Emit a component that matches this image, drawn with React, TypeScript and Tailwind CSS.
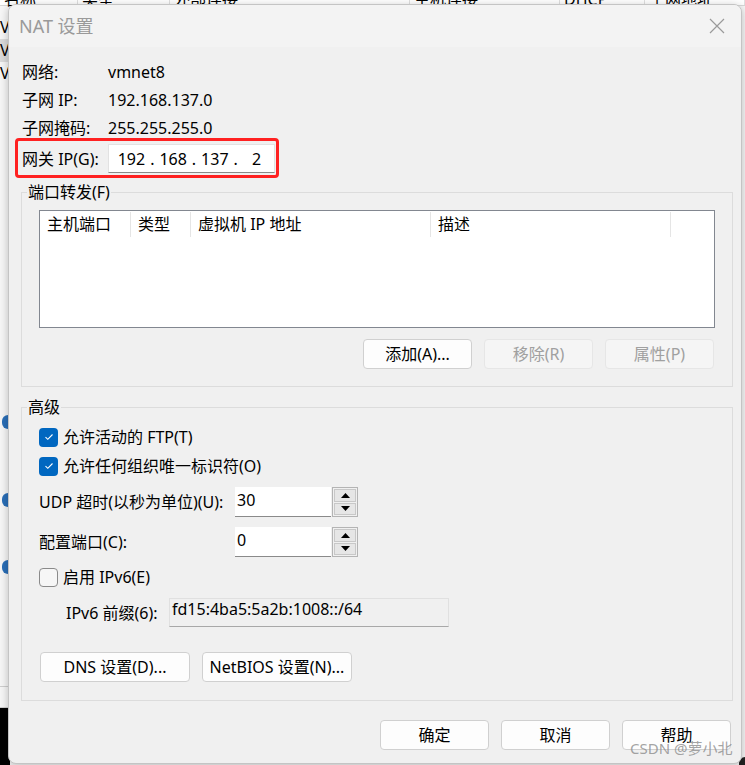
import type { ReactNode } from "react";

const FONT = "font-['Noto_Sans','Noto_Sans_CJK_SC',sans-serif]";

function Knopf({ children, w, disabled }: { children: ReactNode; w: string; disabled?: boolean }) {
  return (
    <div
      className={`${w} flex h-[30px] items-center justify-center rounded-[4px] border ${
        disabled ? "border-[#e6e6e6] bg-[#f5f5f5] text-[#a0a0a0]" : "border-[#d0d0d0] bg-[#fdfdfd] text-black"
      }`}
    >
      {children}
    </div>
  );
}

function Haken({ checked }: { checked?: boolean }) {
  if (checked) {
    return (
      <div className="flex h-[19px] w-[19px] items-center justify-center rounded-[4px] bg-[#0067c0]">
        <svg width="10" height="8" viewBox="0 0 10 8" fill="none">
          <path d="M1.5 4.2 L3.8 6.3 L8.5 1.5" stroke="white" strokeWidth="1.1" />
        </svg>
      </div>
    );
  }
  return <div className="h-[19px] w-[19px] rounded-[4px] border border-[#8a8a8a] bg-[#f6f6f6]" />;
}

function Spinner({ wert }: { wert: string }) {
  return (
    <div className="flex h-[30px]">
      <div className="flex w-[96px] items-start border-b border-[#8a8a8a] bg-white pl-[2px] pt-[1px]">{wert}</div>
      <div className="ml-[1px] flex w-[26px] flex-col gap-[1px] border border-[#b4b4b4] bg-[#f0f0f0] p-[1px]">
        {["up", "down"].map((r) => (
          <div key={r} className="flex flex-1 items-center justify-center border border-[#c8c8c8] bg-[#e6e6e6]">
            <svg width="9" height="5" viewBox="0 0 9 5">
              <path d={r === "up" ? "M0 5 L4.5 0 L9 5 Z" : "M0 0 L4.5 5 L9 0 Z"} fill="black" />
            </svg>
          </div>
        ))}
      </div>
    </div>
  );
}

function Gruppe({ titel, children, className }: { titel: string; children: ReactNode; className: string }) {
  return (
    <div className={`relative border border-[#dcdcdc] ${className}`}>
      <span className="absolute left-[5px] top-[-12px] bg-[#f0f0f0] px-[1px] leading-[22px]">{titel}</span>
      {children}
    </div>
  );
}

const HINTERGRUND = ["名称", "类型", "外部连接", "主机连接", "DHCP", "子网地址"];
const SPALTEN = [
  { titel: "主机端口", w: "w-[91px]" },
  { titel: "类型", w: "w-[60px]" },
  { titel: "虚拟机 IP 地址", w: "w-[240px]" },
  { titel: "描述", w: "w-[240px]" },
];

export default function App() {
  return (
    <div className={`relative h-[765px] w-[745px] overflow-hidden bg-[#f7f7f7] text-[16px] text-black ${FONT}`}>
      {/* fenster dahinter */}
      <div className="absolute left-0 top-[-13px] flex h-[19px] w-full border-b border-[#d8d8d8] bg-white">
        {HINTERGRUND.map((t, i) => (
          <div
            key={t}
            className={`border-r border-[#e0e0e0] pl-[4px] ${
              ["w-[78px]", "w-[92px]", "w-[240px]", "w-[150px]", "w-[85px]", "w-[100px]"][i]
            }`}
          >
            {t}
          </div>
        ))}
      </div>
      <div className="absolute left-0 top-[16px] flex w-[8px] flex-col leading-[23px]">
        <span>V</span>
        <span className="bg-[#dcdcdc]">V</span>
        <span>V</span>
      </div>
      <div className="absolute left-[2px] top-[415px] h-[14px] w-[6px] rounded-l-full bg-[#2a6fb8]" />
      <div className="absolute left-[2px] top-[493px] h-[14px] w-[6px] rounded-l-full bg-[#2a6fb8]" />
      <div className="absolute left-[2px] top-[560px] h-[14px] w-[6px] rounded-l-full bg-[#2a6fb8]" />
      <div className="absolute left-0 top-[686px] h-[22px] w-[8px] border-y border-[#cfcfcf]" />
      <div className="absolute bottom-0 left-0 top-[708px] w-[10px] bg-black" />
      <div className="absolute bottom-0 right-0 h-[8px] w-[6px] rounded-tl-[6px] bg-[#222]" />

      {/* NAT dialog */}
      <div className="absolute left-[8px] top-[4px] flex h-[760px] w-[734px] flex-col overflow-hidden rounded-[8px] border border-[#c4c4c4] bg-[#f0f0f0] shadow-[0_2px_10px_rgba(0,0,0,0.25)]">
        <div className="flex h-[42px] shrink-0 items-center justify-between bg-[#f3f3f3] pl-[10px] pr-[12px]">
          <span className="text-[18px] text-[#9a9a9a]">NAT 设置</span>
          <svg width="16" height="16" viewBox="0 0 16 16" className="mr-[4px]">
            <path d="M1 1 L15 15 M15 1 L1 15" stroke="#9a9a9a" strokeWidth="1.2" />
          </svg>
        </div>

        <div className="flex flex-1 flex-col pl-[12px] pr-[8px] pt-[11px]">
          {[
            ["网络:", "vmnet8"],
            ["子网 IP:", "192.168.137.0"],
            ["子网掩码:", "255.255.255.0"],
          ].map(([k, v]) => (
            <div key={k} className="flex h-[28px] items-center pl-[1px]">
              <span className="w-[86px]">{k}</span>
              <span>{v}</span>
            </div>
          ))}

          <div className="relative mt-[2px] flex h-[29px] items-center pl-[1px]">
            <span className="w-[86px]">网关 IP(G):</span>
            <div className="flex h-[29px] w-[167px] items-center border border-[#e2e2e2] border-b-[#8a8a8a] bg-white pl-[5px]">
              {["192", ".", "168", ".", "137", ".", "2"].map((t, i) => (
                <span key={i} className={`text-center ${t === "." ? "w-[7px]" : "w-[36px]"}`}>
                  {t}
                </span>
              ))}
            </div>
            <div className="pointer-events-none absolute left-[-6px] top-[-6px] h-[40px] w-[264px] rounded-[4px] border-[3px] border-[#ff2121]" />
          </div>

          <Gruppe titel="端口转发(F)" className="mt-[19px] h-[195px] pl-[17px] pr-[17px] pt-[17px]">
            <div className="h-[118px] border border-[#828790] bg-white">
              <div className="flex h-[26px] items-center">
                {SPALTEN.map((s) => (
                  <div key={s.titel} className={`${s.w} flex h-[25px] items-center border-r border-[#e5e5e5] pl-[7px]`}>
                    {s.titel}
                  </div>
                ))}
              </div>
            </div>
            <div className="mt-[11px] flex justify-end gap-[12px] pr-[1px]">
              <Knopf w="w-[109px]">添加(A)...</Knopf>
              <Knopf w="w-[109px]" disabled>
                移除(R)
              </Knopf>
              <Knopf w="w-[109px]" disabled>
                属性(P)
              </Knopf>
            </div>
          </Gruppe>

          <Gruppe titel="高级" className="mt-[20px] h-[294px] pl-[17px] pt-[19px]">
            <div className="flex h-[20px] items-center gap-[5px]">
              <Haken checked />
              <span>允许活动的 FTP(T)</span>
            </div>
            <div className="mt-[9px] flex h-[20px] items-center gap-[5px]">
              <Haken checked />
              <span>允许任何组织唯一标识符(O)</span>
            </div>
            <div className="mt-[11px] flex h-[30px] items-center">
              <span className="w-[196px]">UDP 超时(以秒为单位)(U):</span>
              <Spinner wert="30" />
            </div>
            <div className="mt-[10px] flex h-[30px] items-center">
              <span className="w-[196px]">配置端口(C):</span>
              <Spinner wert="0" />
            </div>
            <div className="mt-[10px] flex h-[20px] items-center gap-[5px]">
              <Haken />
              <span>启用 IPv6(E)</span>
            </div>
            <div className="mt-[11px] flex h-[29px] items-center pl-[27px]">
              <span className="w-[103px]">IPv6 前缀(6):</span>
              <div className="flex h-[29px] w-[280px] items-start border border-[#e0e0e0] border-b-[#a8a8a8] bg-[#f0f0f0] pl-[2px] leading-[21px]">
                fd15:4ba5:5a2b:1008::/64
              </div>
            </div>
            <div className="mt-[25px] flex gap-[12px] pl-[1px]">
              <Knopf w="w-[150px]">DNS 设置(D)...</Knopf>
              <Knopf w="w-[150px]">NetBIOS 设置(N)...</Knopf>
            </div>
          </Gruppe>

          <div className="mt-[19px] flex justify-end gap-[12px] pr-[2px]">
            <Knopf w="w-[109px]">确定</Knopf>
            <Knopf w="w-[109px]">取消</Knopf>
            <Knopf w="w-[109px]">帮助</Knopf>
          </div>
        </div>
      </div>

      <span className="pointer-events-none absolute left-[630px] top-[737px] text-[15px] text-[#8c8c8c]/80">CSDN @萝小北</span>
    </div>
  );
}
